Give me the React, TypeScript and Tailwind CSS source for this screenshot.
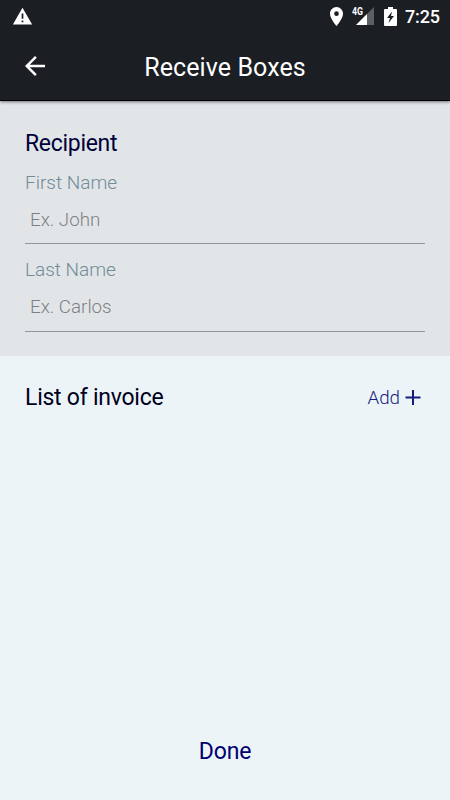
export default function App() {
  return (
    <div className="flex h-[800px] w-[450px] flex-col overflow-hidden bg-[#ecf4f8] font-['Roboto',sans-serif]">
      <div className="z-10 border-b border-black bg-[#1b1e23] text-white shadow-[0_1px_3px_rgba(0,0,0,0.5)]">
        <div className="flex h-8 items-center justify-between pr-[10px] pl-3">
          <svg width="21" height="21" viewBox="0 0 24 24" fill="white"><path d="M1 21h22L12 2 1 21zm12-2.500h-2v-2h2v2zm0-4h-2V8.500h2v6z" /></svg>
          <div className="flex items-center">
            <svg width="13" height="19" viewBox="5 2 14 20" preserveAspectRatio="none" fill="white"><path d="M12 2C8.13 2 5 5.13 5 9c0 5.25 7 13 7 13s7-7.75 7-13c0-3.87-3.13-7-7-7zm0 9.5a2.5 2.5 0 1 1 0-5 2.5 2.5 0 0 1 0 5z" /></svg>
            <svg className="ml-[9px]" width="22" height="20" viewBox="0 0 22 20"><path d="M22 1V19H4Z" fill="#5c6063" /><path d="M15 8V19H4Z" fill="white" /><text x="0" y="9" fill="white" fontSize="10.5" fontWeight="700" textLength="11" lengthAdjust="spacingAndGlyphs">4G</text></svg>
            <svg className="ml-[10px]" width="13" height="19" viewBox="0 0 13 19" fill="white"><path fillRule="evenodd" d="M4 0H9V2H12Q13 2 13 3V18Q13 19 12 19H1Q0 19 0 18V3Q0 2 1 2H4ZM8 4.500L3 11H6L4.500 16L10 9H7Z" /></svg>
            <span className="ml-[8px] w-[35px] text-[18px] font-medium tracking-[-0.15px]">7:25</span>
          </div>
        </div>
        <div className="flex h-[68px] items-center px-5">
          <svg width="30" height="30" viewBox="0 0 24 24" fill="white"><path d="M20 11H7.830l5.590-5.590L12 4l-8 8 8 8 1.410-1.410L7.830 13H20v-2z" /></svg>
          <h1 className="flex-1 pt-[3px] pr-[30px] text-center text-[25px] tracking-[0.08px]">Receive Boxes</h1>
        </div>
      </div>
      <section className="h-[255px] bg-[#e1e5e8] px-[25px] pt-[28px]">
        <h2 className="text-[23px] leading-[30px] tracking-[-0.3px] text-[#000038]">Recipient</h2>
        <label className="mt-3 block text-[19px] leading-6 font-light text-[#718b97]">First Name</label>
        <div className="h-[49px] border-b border-[#92989c] pt-[13px] pl-[5px] text-[18.75px] leading-6 font-light text-[#7e8183]">Ex. John</div>
        <label className="mt-[14px] block text-[19px] leading-6 font-light text-[#718b97]">Last Name</label>
        <div className="h-[50px] border-b border-[#92989c] pt-[13px] pl-[5px] text-[18.75px] leading-6 font-light text-[#7e8183]">Ex. Carlos</div>
      </section>
      <section className="flex flex-1 flex-col px-[25px] pt-[27px]">
        <div className="flex items-center justify-between text-[23px] leading-[30px] text-[#00001c]">
          <h2 className="tracking-[-0.25px]">List of invoice</h2>
          <button className="flex items-center pr-1 text-[18.75px] font-light text-[#151b7b]">Add<svg className="ml-1" width="17" height="17" viewBox="0 0 17 17" stroke="currentColor" strokeWidth="2"><path d="M9 0V15M1.500 7.500H16.500" /></svg></button>
        </div>
        <button className="mt-auto mb-[33px] text-[23px] leading-[30px] tracking-[-0.1px] text-[#000070]">Done</button>
      </section>
    </div>
  );
}
